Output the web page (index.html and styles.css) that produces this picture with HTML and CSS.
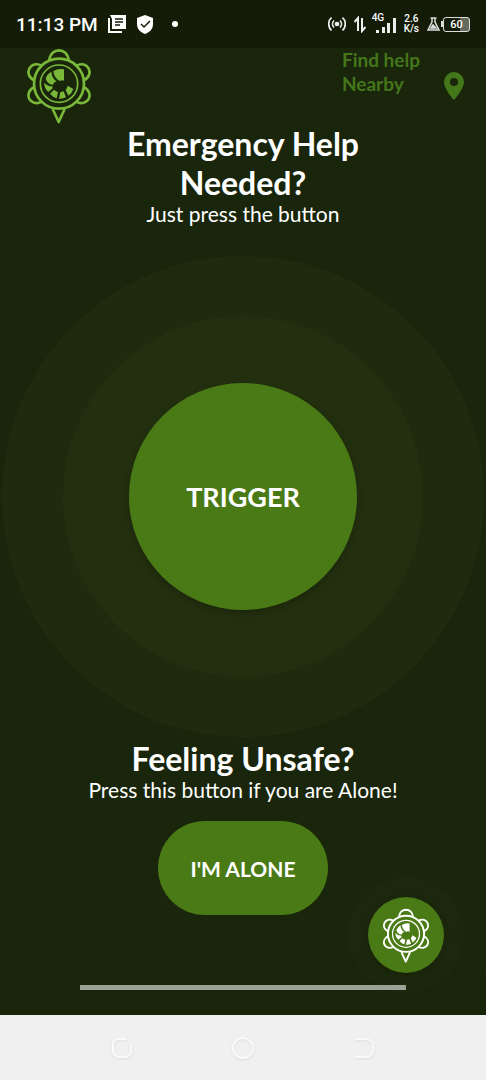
FILE: index.html
```
<!DOCTYPE html>
<html lang="en">
<head>
<meta charset="utf-8">
<meta name="viewport" content="width=device-width, initial-scale=1">
<title>Emergency Help</title>
<link rel="stylesheet" href="styles.css">
</head>
<body>
<svg class="defs" aria-hidden="true">
  <symbol id="turtle" viewBox="6 6 198 228">
    <g fill="none" stroke="currentColor" stroke-width="8" stroke-linejoin="round">
      <circle cx="105" cy="113" r="75"/>
      <circle cx="105" cy="113" r="56" stroke-width="5"/>
      <path d="M76 43C80 3 130 3 134 43"/>
      <path d="M80 43C80 3 130 3 130 43" transform="rotate(63 105 113)"/>
      <path d="M80 43C80 3 130 3 130 43" transform="rotate(117 105 113)"/>
      <path d="M80 43C80 3 130 3 130 43" transform="rotate(-63 105 113)"/>
      <path d="M80 43C80 3 130 3 130 43" transform="rotate(-117 105 113)"/>
      <path d="M86 189L104 228L122 189"/>
    </g>
    <g fill="currentColor">
      <path d="M88 76Q102 66 120 70V104Q113 101 107 105Q90 96 88 76Z"/>
      <path d="M82 77Q68 85 65 98Q70 114 87 116Q89 108 98 106Q83 96 82 77Z"/>
      <path d="M60 110Q61 127 73 138L86 127Q85 123 86 121Q70 121 60 110Z"/>
      <path d="M90 131L78 143Q86 153 98 157L102 138Q96 136 90 131Z"/>
      <path d="M109 138L105 158Q117 159 126 154L119 136Q115 138 109 138Z"/>
      <path d="M125 132L133 149Q145 141 148 129L131 119Q129 127 125 132Z"/>
    </g>
  </symbol>
</svg>
<div class="screen">
  <div class="status">
    <div class="status-group status-left">
      <span class="time">11:13 PM</span>
      <svg width="18" height="18" viewBox="0 0 18 18"><path d="M1 3v14h13" fill="none" stroke="#fff" stroke-width="2"/><path d="M2 0h16v14H4V4z" fill="#fff"/><path d="M7 4h8M7 7h8M7 10h5" stroke="#151d09" stroke-width="1.5"/></svg>
      <svg width="18" height="19" viewBox="0 0 18 19"><path d="M9 0l8 3v6c0 5-3 8-8 10-5-2-8-5-8-10V3z" fill="#fff"/><path d="M5 9l3 3 6-6" fill="none" stroke="#151d09" stroke-width="1.5"/></svg>
      <span class="dot"></span>
    </div>
    <div class="status-group status-right">
      <svg width="18" height="16" viewBox="0 0 18 16" fill="none" stroke="#eee" stroke-width="1.7"><circle cx="9" cy="8" r="1.5" fill="#eee"/><path d="M6 4.5a5 5 0 0 0 0 7M12 4.5a5 5 0 0 1 0 7M3.5 1.5a9 9 0 0 0 0 13M14.5 1.5a9 9 0 0 1 0 13"/></svg>
      <svg width="12" height="17" viewBox="0 0 12 17" fill="none" stroke="#eee" stroke-width="2"><path d="M0.5 6L4 2V15M8 2v13l3.5-4"/></svg>
      <span class="signal"><span class="tiny">4G</span>
        <svg width="20" height="15" viewBox="0 0 20 15" fill="#eee"><path d="M0 12h3v3H0zM6 9h3v6H6zM11 5h3v10h-3zM17 0h3v15h-3z"/></svg>
      </span>
      <span class="tiny speed">2.6<br>K/s</span>
      <span class="power">
        <svg width="13" height="14" viewBox="0 0 13 14" fill="none" stroke="#ddd" stroke-width="1.5"><path d="M3.5 1h6M5 1v4L1 13h11L8 5V1"/><path d="M4 11l2-3 3 3z" fill="#ddd"/></svg>
        <span class="nub"></span><span class="battery">60</span>
      </span>
    </div>
  </div>

  <header class="top">
    <svg class="logo" role="img" aria-label="Logo"><use href="#turtle"/></svg>
    <a class="nearby" href="#nearby">
      <span>Find help<br>Nearby</span>
      <svg width="20" height="28" viewBox="0 0 20 28"><path fill-rule="evenodd" d="M10 0A10 10 0 0 0 0 10c0 7 10 18 10 18s10-11 10-18A10 10 0 0 0 10 0zm0 6a4 4 0 1 1 0 8 4 4 0 0 1 0-8z" fill="currentColor"/></svg>
    </a>
  </header>

  <main class="main">
    <h1 class="title">Emergency Help Needed?</h1>
    <p class="sub">Just press the button</p>
    <div class="ring outer"><div class="ring inner"><button class="trigger" type="button">TRIGGER</button></div></div>
    <h2 class="title">Feeling Unsafe?</h2>
    <p class="sub">Press this button if you are Alone!</p>
    <button class="alone" type="button">I'M ALONE</button>
  </main>

  <div class="sheet"><div class="handle"></div></div>
  <div class="halo"><button class="fab" type="button" aria-label="Open menu"><svg class="fab-logo"><use href="#turtle"/></svg></button></div>
</div>
<nav class="nav" aria-label="System navigation">
  <button type="button" aria-label="Recent apps"><svg width="24" height="24" viewBox="0 0 24 24"><path d="M17 3H8a5 5 0 0 0-5 5v7a6 6 0 0 0 6 6h6a6 6 0 0 0 6-6V8"/></svg></button>
  <button type="button" aria-label="Home"><svg width="24" height="24" viewBox="0 0 24 24"><circle cx="12" cy="12" r="10"/></svg></button>
  <button type="button" aria-label="Back"><svg width="24" height="24" viewBox="0 0 24 24"><path d="M3 3h11a7 7 0 0 1 7 7v4a7 7 0 0 1-7 7H3"/></svg></button>
</nav>
</body>
</html>
```
FILE: styles.css
```
* { box-sizing: border-box; }
body {
  margin: 0;
  min-height: 100vh;
  display: flex;
  flex-direction: column;
  background: #1a260b;
  color: #fff;
  font-family: Lato, "Open Sans", sans-serif;
}
button { border: 0; padding: 0; background: none; color: inherit; font: inherit; }
.defs { position: absolute; width: 0; height: 0; }
.screen { position: relative; flex: 1; display: flex; flex-direction: column; }

.status {
  height: 48px;
  padding: 0 16px;
  display: flex;
  align-items: center;
  justify-content: space-between;
  background: #141c08;
  font-family: Roboto, sans-serif;
}
.status-group { display: flex; align-items: center; }
.status-left { gap: 10px; }
.status-right { gap: 8px; }
.time { font-size: 19px; font-weight: 500; }
.dot { width: 6px; height: 6px; margin-left: 8px; border-radius: 50%; background: #fff; }
.tiny { font-size: 10px; line-height: 10px; font-weight: 500; }
.signal { display: grid; }
.signal > * { grid-area: 1 / 1; }
.signal .tiny { margin: -3px 0 0 -2px; }
.signal svg { margin: 2px 0 0 2px; }
.speed { text-align: center; }
.power { display: flex; align-items: center; }
.nub { width: 2px; height: 6px; margin-left: 1px; background: #ddd; }
.battery {
  width: 27px;
  height: 15px;
  border: 1px solid #ddd;
  border-radius: 3px;
  background: linear-gradient(90deg, transparent 65%, #666b5e 65%);
  font-size: 11px;
  line-height: 13px;
  font-weight: 500;
  text-align: center;
}

.top { display: flex; justify-content: space-between; padding: 0 22px 0 26px; }
.logo { width: 66px; height: 76px; color: #79b839; }
.nearby {
  display: flex;
  align-items: flex-end;
  gap: 24px;
  height: 52px;
  color: #44761a;
  font-size: 19px;
  line-height: 24px;
  font-weight: 700;
  text-decoration: none;
}
.nearby span { align-self: flex-start; }

.main { display: flex; flex-direction: column; align-items: center; }
.title {
  max-width: 300px;
  margin: 0;
  font-size: 32px;
  line-height: 39px;
  font-weight: 700;
  text-align: center;
}
.sub { margin: 0; font-size: 21px; line-height: 24px; text-align: center; }
.ring { display: grid; place-items: center; aspect-ratio: 1; border-radius: 50%; }
.outer { width: 99%; margin: 30px 0 2px; background: #1f2b0f; }
.inner { width: 75%; background: #23300f; }
.trigger {
  width: 63%;
  aspect-ratio: 1;
  border-radius: 50%;
  background: #4a7a16;
  box-shadow: 0 3px 6px #1b250c;
  font-size: 27px;
  font-weight: 700;
}
.alone {
  width: 170px;
  height: 94px;
  margin-top: 19px;
  border-radius: 47px;
  background: #4a7a16;
  font-size: 21px;
  font-weight: 700;
}

.sheet {
  height: 54px;
  margin-top: auto;
  padding-top: 24px;
  border-radius: 24px 24px 0 0;
  background: #19250a;
}
.handle { width: 67%; height: 5px; margin: 0 auto; background: #9ba195; }
.halo {
  position: absolute;
  right: 22px;
  bottom: 22px;
  width: 116px;
  height: 116px;
  display: grid;
  place-items: center;
  border-radius: 50%;
  background: rgba(255, 255, 255, 0.01);
}
.fab {
  display: grid;
  place-items: center;
  width: 76px;
  height: 76px;
  border-radius: 50%;
  background: #4a7a16;
  box-shadow: 0 1px 4px #17200a;
}
.fab-logo { width: 48px; height: 55px; }

.nav {
  height: 65px;
  display: flex;
  align-items: center;
  justify-content: center;
  gap: 97px;
  background: #f0f0f0;
}
.nav button { height: 24px; }
.nav svg { display: block; fill: none; stroke: #fafafa; stroke-width: 2; filter: drop-shadow(0 1px 1px #dcdcdc); }
```
